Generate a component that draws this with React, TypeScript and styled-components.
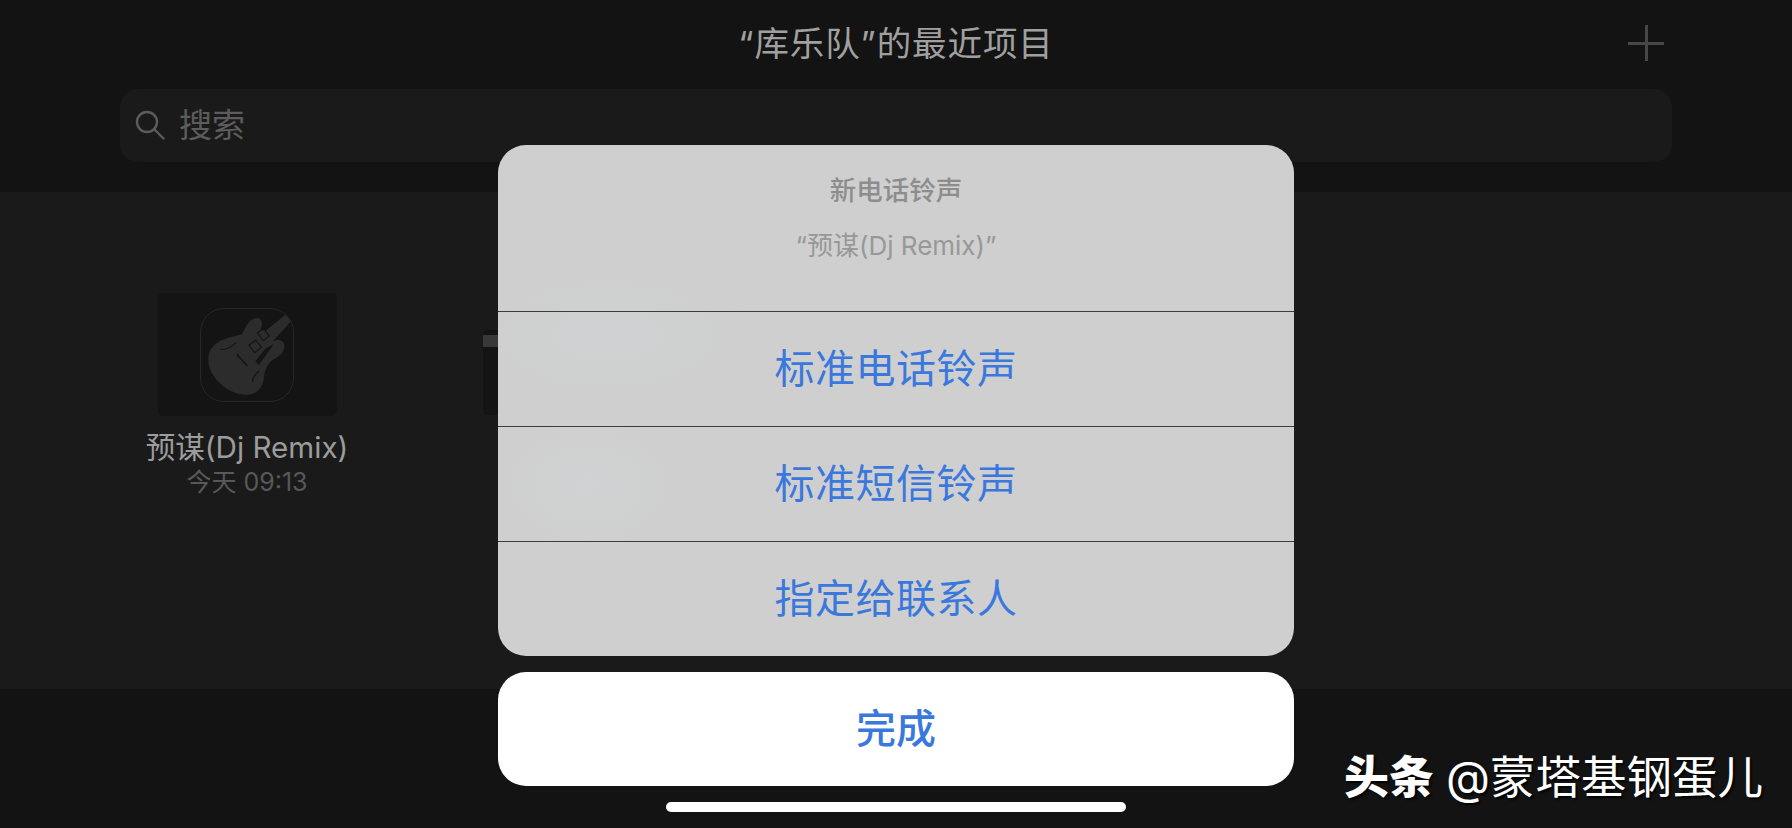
import React from "react";
import styled, { createGlobalStyle } from "styled-components";

const GlobalStyle = createGlobalStyle`
  html, body {
    margin: 0;
    padding: 0;
    background: #131313;
    font-family: Inter, "Noto Sans CJK SC", sans-serif;
  }
`;

const GuitarIcon = () => (
  <svg width="94" height="94" viewBox="0 0 282 282">
    <path
      fill="#2c2c2c"
      d="M197 68 L262 16 L278 34 L219 100 C234 92 250 96 253 110 C256 128 242 142 228 150 C206 162 196 176 192 208 C188 242 170 260 137 260 C98 260 56 232 36 196 C18 164 22 128 46 108 C66 92 100 86 127 78 C134 60 150 30 170 30 C188 30 188 50 182 63 Z"
    />
    <path fill="#141414" d="M196 122 L222 108 L176 172 L166 160 Z" />
    <g fill="none" stroke="#141414" strokeWidth="3.5">
      <path d="M172 75 L190 62 L208 84 L190 98 Z" />
      <path d="M147 112 L168 96 L184 118 L164 134 Z" />
      <path d="M110 138 L142 174" strokeWidth="5" />
      <path d="M62 124 C76 126 94 118 108 104" />
      <path d="M158 222 C156 208 166 198 178 188" />
    </g>
  </svg>
);

const SearchIcon = () => (
  <svg width="30" height="30" viewBox="0 0 30 30" fill="none" stroke="#5c5c5c" strokeWidth="2.4">
    <circle cx="12" cy="12" r="10" />
    <path d="M19 19 L28.5 28.5" strokeLinecap="round" />
  </svg>
);

export default function App() {
  return (
    <Screen>
      <GlobalStyle />
      <Header>
        <TitleRow>
          <Title>“库乐队”的最近项目</Title>
          <PlusButton />
        </TitleRow>
        <SearchBar>
          <SearchIcon />
          <SearchText>搜索</SearchText>
        </SearchBar>
      </Header>

      <Browser>
        <ProjectCard>
          <Thumb>
            <AppTile>
              <GuitarIcon />
            </AppTile>
          </Thumb>
          <ProjectName>预谋(Dj Remix)</ProjectName>
          <ProjectDate>今天 09:13</ProjectDate>
        </ProjectCard>
        <SecondThumb>
          <ThumbBar />
        </SecondThumb>
      </Browser>

      <BottomBar />

      <SheetLayer>
        <ActionGroup>
          <SheetHead>
            <SheetTitle>新电话铃声</SheetTitle>
            <SheetSubtitle>“预谋(Dj Remix)”</SheetSubtitle>
          </SheetHead>
          <ActionRow>标准电话铃声</ActionRow>
          <ActionRow>标准短信铃声</ActionRow>
          <ActionRow>指定给联系人</ActionRow>
        </ActionGroup>
        <DoneButton>完成</DoneButton>
        <HomeBar />
      </SheetLayer>

      <Watermark>
        <b>头条</b>
        <span>@蒙塔基钢蛋儿</span>
      </Watermark>
    </Screen>
  );
}

const Screen = styled.div`
  position: relative;
  width: 1792px;
  height: 828px;
  overflow: hidden;
  display: flex;
  flex-direction: column;
  background: #131313;
`;

const Header = styled.header`
  height: 192px;
  box-sizing: border-box;
  padding: 0 120px;
  display: flex;
  flex-direction: column;
  background: #131313;
`;

const TitleRow = styled.div`
  position: relative;
  height: 89px;
  display: flex;
  justify-content: center;
`;

const Title = styled.h1`
  margin: 21px 0 0;
  font-size: 34.5px;
  line-height: 46px;
  font-weight: 400;
  color: #a0a0a0;
  letter-spacing: 0.9px;
`;

const PlusButton = styled.div`
  position: absolute;
  left: 1508px;
  top: 25px;
  width: 36px;
  height: 36px;
  background:
    linear-gradient(#474747, #474747) center / 100% 3px no-repeat,
    linear-gradient(#474747, #474747) center / 3px 100% no-repeat;
`;

const SearchBar = styled.div`
  height: 73px;
  box-sizing: border-box;
  padding: 0 0 2px 15px;
  display: flex;
  align-items: center;
  gap: 14px;
  border-radius: 18px;
  background: #1a1a1a;
`;

const SearchText = styled.span`
  font-size: 33px;
  line-height: 40px;
  color: #5c5c5c;
`;

const Browser = styled.main`
  height: 497px;
  box-sizing: border-box;
  padding: 101px 0 0 147px;
  display: flex;
  align-items: flex-start;
  gap: 136px;
  background: #1a1a1a;
`;

const ProjectCard = styled.article`
  width: 200px;
  display: flex;
  flex-direction: column;
  align-items: center;
`;

const Thumb = styled.div`
  width: 179px;
  height: 123px;
  display: flex;
  align-items: center;
  justify-content: center;
  border-radius: 5px;
  background: #141414;
`;

const AppTile = styled.div`
  width: 94px;
  height: 94px;
  overflow: hidden;
  box-sizing: border-box;
  border: 1.5px solid #272727;
  border-radius: 24px;
  background: #141414;
  display: flex;
  align-items: center;
  justify-content: center;

  svg {
    flex: none;
  }
`;

const ProjectName = styled.div`
  margin-top: 13px;
  font-size: 29.6px;
  line-height: 36px;
  color: #9c9c9c;
  white-space: nowrap;
`;

const ProjectDate = styled.div`
  margin-top: 2px;
  font-size: 25px;
  line-height: 30px;
  color: #585858;
  white-space: nowrap;
`;

const SecondThumb = styled.div`
  margin-top: 37px;
  width: 120px;
  height: 85px;
  box-sizing: border-box;
  padding-top: 5px;
  border-radius: 5px;
  background: #141414;
`;

const ThumbBar = styled.div`
  height: 12px;
  background: #383838;
`;

const BottomBar = styled.footer`
  flex: 1;
  background: #131313;
`;

const SheetLayer = styled.div`
  position: absolute;
  inset: 0;
  box-sizing: border-box;
  padding-top: 145px;
  display: flex;
  flex-direction: column;
  align-items: center;
`;

const ActionGroup = styled.section`
  width: 796px;
  height: 511px;
  overflow: hidden;
  border-radius: 28px;
  display: flex;
  flex-direction: column;
  background:
    radial-gradient(ellipse 100px 70px at 90px 340px, #d1d2d3, transparent),
    radial-gradient(ellipse 160px 80px at 110px 190px, #d0d1d2, transparent),
    #cfcfcf;
`;

const SheetHead = styled.div`
  height: 166px;
  box-sizing: border-box;
  padding-top: 27px;
  display: flex;
  flex-direction: column;
  align-items: center;
`;

const SheetTitle = styled.div`
  font-size: 26.5px;
  line-height: 36px;
  font-weight: 500;
  color: #8d8d8d;
`;

const SheetSubtitle = styled.div`
  margin-top: 20px;
  font-size: 26px;
  line-height: 36px;
  color: #989898;
`;

const ActionRow = styled.button`
  flex: 1;
  width: 100%;
  padding: 0 0 6px;
  border: 0;
  border-top: 1px solid #3c3c3c;
  background: transparent;
  font-family: inherit;
  font-size: 40px;
  letter-spacing: 0.5px;
  color: #3a78dd;
`;

const DoneButton = styled.button`
  margin-top: 16px;
  width: 796px;
  height: 114px;
  padding: 0 0 6px;
  border: 0;
  border-radius: 28px;
  background: #fff;
  font-family: inherit;
  font-size: 40px;
  font-weight: 500;
  color: #3a78dd;
`;

const HomeBar = styled.div`
  margin-top: 16px;
  width: 460px;
  height: 10px;
  border-radius: 5px;
  background: #fff;
`;

const Watermark = styled.div`
  position: absolute;
  left: 1344px;
  top: 750px;
  display: flex;
  align-items: center;
  gap: 12px;
  font-size: 45px;
  line-height: 56px;
  color: #fff;
  white-space: nowrap;
  text-shadow: 2px 2px 2px rgba(0, 0, 0, 0.8);

  b {
    font-weight: 900;
  }

  span {
    font-size: 45.5px;
    font-weight: 400;
  }
`;
